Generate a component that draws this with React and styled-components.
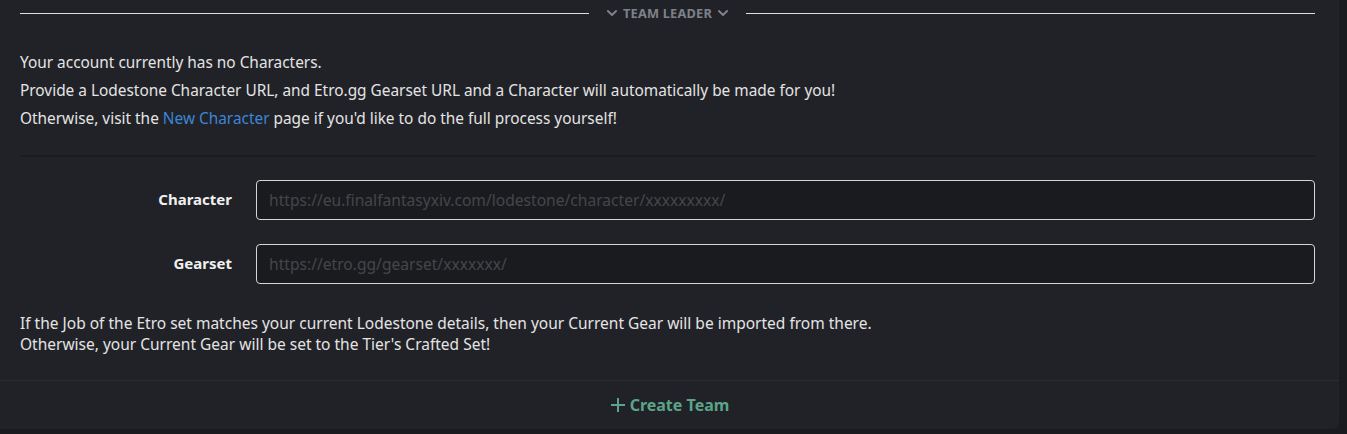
import React from 'react';
import styled, { createGlobalStyle } from "styled-components";

const GlobalStyle = createGlobalStyle`
    body {
        margin: 0;
        background: #1a1b1f;
        font-family: "Noto Sans", "Open Sans", sans-serif;
        color: #e4e4e4;
    }
`;

const Chevron = () => (
    <svg width="14" height="14" viewBox="0 0 24 24" fill="none" stroke="currentColor" strokeWidth="3.4" strokeLinecap="round" strokeLinejoin="round">
        <path d="M5 8.5l7 7 7-7" />
    </svg>
);

const PlusIcon = () => (
    <svg width="16" height="16" viewBox="0 0 16 16" fill="none" stroke="currentColor" strokeWidth="2">
        <path d="M8 1v14M1 8h14" />
    </svg>
);

const App = () => {
    return (
        <>
            <GlobalStyle/>
            <Card>
                <Body>
                    <SectionDivider>
                        <Rule/>
                        <DividerLabel>
                            <Chevron/>
                            Team Leader
                            <Chevron/>
                        </DividerLabel>
                        <Rule/>
                    </SectionDivider>

                    <Intro>
                        <Line>Your account currently has no Characters.</Line>
                        <Line>Provide a Lodestone Character URL, and Etro.gg Gearset URL and a Character will automatically be made for you!</Line>
                        <Line>Otherwise, visit the <Link href="#">New Character</Link> page if you'd like to do the full process yourself!</Line>
                    </Intro>

                    <Separator/>

                    <Form>
                        <Field>
                            <Label>Character</Label>
                            <Input placeholder="https://eu.finalfantasyxiv.com/lodestone/character/xxxxxxxxx/"/>
                        </Field>
                        <Field>
                            <Label>Gearset</Label>
                            <Input placeholder="https://etro.gg/gearset/xxxxxxx/"/>
                        </Field>
                    </Form>

                    <Note>
                        If the Job of the Etro set matches your current Lodestone details, then your Current Gear will be imported from there.<br/>
                        Otherwise, your Current Gear will be set to the Tier's Crafted Set!
                    </Note>
                </Body>
                <Footer>
                    <CreateButton>
                        <PlusIcon/> Create Team
                    </CreateButton>
                </Footer>
            </Card>
        </>
    )
}

export default App

const Card = styled.div`
    width: 1339px;
    height: 429px;
    background: #212227;
    border-bottom-right-radius: 6px;
    display: flex;
    flex-direction: column;
`;

const Body = styled.div`
    padding: 0 24px 0 20px;
    flex: 1;
`;

const SectionDivider = styled.div`
    display: flex;
    align-items: center;
    gap: 16px;
    padding-top: 5px;
    height: 16px;
`;

const Rule = styled.div`
    flex: 1;
    height: 1px;
    background: #dedede;
`;

const DividerLabel = styled.div`
    display: flex;
    align-items: center;
    gap: 4px;
    font-size: 12.8px;
    font-weight: 700;
    text-transform: uppercase;
    color: #7d8189;
    letter-spacing: 0.2px;
`;

const Intro = styled.div`
    margin-top: 28px;
`;

const Line = styled.p`
    margin: 0;
    font-size: 15.4px;
    line-height: 28px;
`;

const Link = styled.a`
    color: #3d86d6;
    text-decoration: none;
`;

const Separator = styled.div`
    height: 2px;
    background: #1b1c20;
    margin-top: 22px;
`;

const Form = styled.div`
    display: flex;
    flex-direction: column;
    gap: 24px;
    margin-top: 23px;
`;

const Field = styled.div`
    display: grid;
    grid-template-columns: 212px 1fr;
    gap: 24px;
    align-items: center;
`;

const Label = styled.label`
    text-align: right;
    font-weight: 700;
    font-size: 15px;
    color: #f0f0f0;
    margin-top: -2px;
`;

const Input = styled.input`
    height: 40px;
    box-sizing: border-box;
    background: #1a1b1e;
    border: 1px solid #d6d6d6;
    border-radius: 4px;
    padding: 0 12px;
    font-family: inherit;
    font-size: 15.6px;
    color: #e4e4e4;
    outline: none;

    &::placeholder {
        color: #45464c;
    }
`;

const Note = styled.p`
    margin: 29px 0 0;
    font-size: 15.5px;
    line-height: 21px;
`;

const Footer = styled.div`
    border-top: 1px solid #2c2d33;
    height: 48px;
    display: flex;
    align-items: center;
    justify-content: center;
`;

const CreateButton = styled.button`
    background: none;
    border: none;
    display: flex;
    align-items: center;
    gap: 4px;
    font-family: inherit;
    font-size: 16px;
    font-weight: 700;
    color: #5aa58a;
    cursor: pointer;
    padding: 0;
`;
